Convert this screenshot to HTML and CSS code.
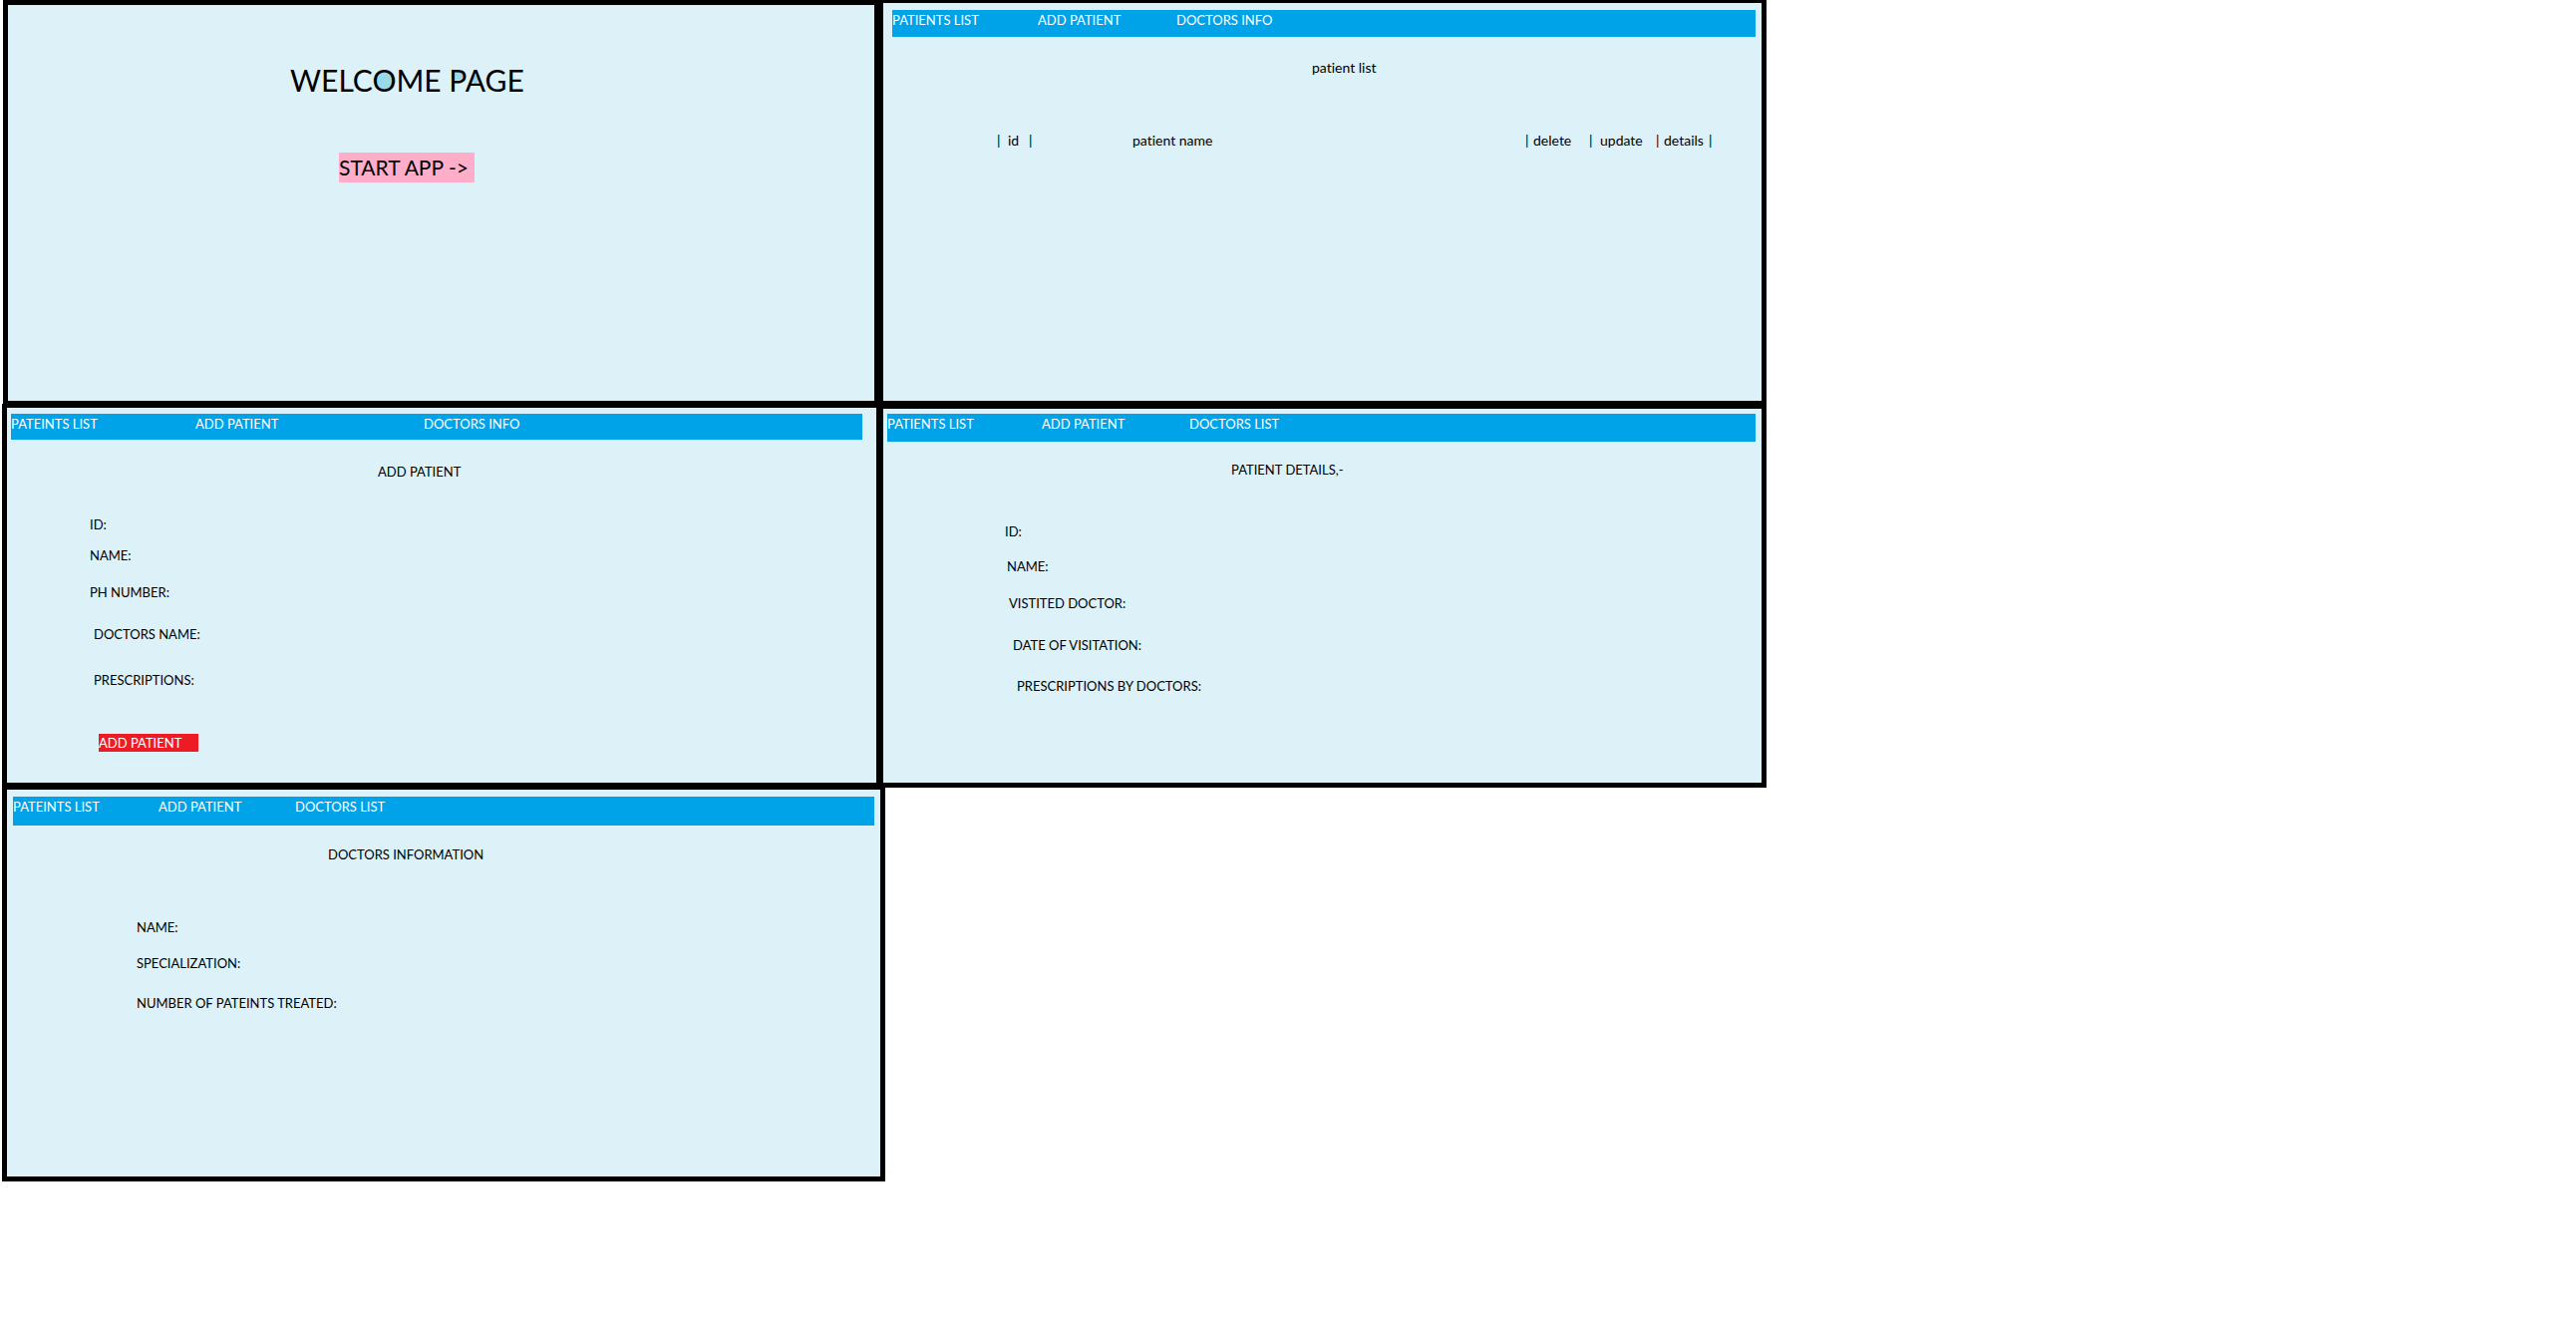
FILE: index.html
```
<!DOCTYPE html>
<html lang="en">
<head>
<meta charset="utf-8">
<title>Patient app wireframes</title>
<link rel="stylesheet" href="styles.css">
</head>
<body>
<main class="board">
  <div class="row row-top">
    <section class="frame welcome">
      <h1 class="welcome-title">WELC<span class="fill-o">O</span>ME <span class="fill-p">P</span><span class="fill-a">A</span>GE</h1>
      <button type="button" class="start">START APP -&gt;</button>
    </section>
    <section class="frame list">
      <nav class="nav">
        <a href="#">PATIENTS LIST</a><a href="#">ADD PATIENT</a><a href="#">DOCTORS INFO</a>
      </nav>
      <h2 class="title">patient list</h2>
      <table class="patients">
        <thead>
          <tr>
            <td class="c-bar">|</td><th class="c-id">id</th><td class="c-bar">|</td>
            <th class="c-name">patient name</th>
            <td class="c-tight">|</td><th class="c-action">delete</th>
            <td class="c-bar">|</td><th class="c-action">update</th>
            <td class="c-tight">|</td><th class="c-details">details</th><td class="c-end">|</td>
          </tr>
        </thead>
      </table>
    </section>
  </div>

  <div class="row row-middle">
    <section class="frame add">
      <nav class="nav">
        <a href="#">PATEINTS LIST</a><a href="#">ADD PATIENT</a><a href="#">DOCTORS INFO</a>
      </nav>
      <h2 class="title">ADD PATIENT</h2>
      <form class="fields">
        <div class="field"><label for="pid">ID:</label><input id="pid" type="text"></div>
        <div class="field"><label for="pname">NAME:</label><input id="pname" type="text"></div>
        <div class="field"><label for="phone">PH NUMBER:</label><input id="phone" type="tel"></div>
        <div class="field inset"><label for="doctor">DOCTORS NAME:</label><input id="doctor" type="text"></div>
        <div class="field inset"><label for="presc">PRESCRIPTIONS:</label><input id="presc" type="text"></div>
        <button type="button" class="submit">ADD PATIENT</button>
      </form>
    </section>
    <section class="frame details">
      <nav class="nav">
        <a href="#">PATIENTS LIST</a><a href="#">ADD PATIENT</a><a href="#">DOCTORS LIST</a>
      </nav>
      <h2 class="title">PATIENT DETAILS,-</h2>
      <ul class="fields">
        <li>ID:</li>
        <li>NAME:</li>
        <li>VISTITED DOCTOR:</li>
        <li>DATE OF VISITATION:</li>
        <li>PRESCRIPTIONS BY DOCTORS:</li>
      </ul>
    </section>
  </div>

  <div class="row row-bottom">
    <section class="frame doctors">
      <nav class="nav">
        <a href="#">PATEINTS LIST</a><a href="#">ADD PATIENT</a><a href="#">DOCTORS LIST</a>
      </nav>
      <h2 class="title">DOCTORS INFORMATION</h2>
      <ul class="fields">
        <li>NAME:</li>
        <li>SPECIALIZATION:</li>
        <li>NUMBER OF PATEINTS TREATED:</li>
      </ul>
    </section>
  </div>
</main>
</body>
</html>
```
FILE: styles.css
```
* { box-sizing: border-box; }

body {
  margin: 0;
  background: #fff;
  color: #000;
  font: 13px/18px Lato, "Liberation Sans", sans-serif;
  font-variant-ligatures: none;
}

h1, h2, ul { margin: 0; padding: 0; font-weight: 400; }
ul { list-style: none; }
button, input { font: inherit; border: 0; padding: 0; background: none; }

/* Board: the last column of each row stays empty */
.board { padding-left: 2px; }
.row { display: grid; align-items: stretch; }
.row-top { grid-template-columns: 878fr 891fr 812fr; padding-left: 1px; }
.row-middle { grid-template-columns: 880fr 890fr 812fr; }
.row-bottom { grid-template-columns: 886fr 1696fr; }

.frame { background: #dcf1f8; border: 5px solid #000; }

/* Navigation bar */
.nav {
  display: grid;
  padding-top: 1px;
  background: #00a2e8;
  color: #fff;
}
.nav a { color: inherit; text-decoration: none; white-space: nowrap; }
.title { font-size: 13px; line-height: 18px; white-space: nowrap; }

/* Welcome */
.welcome { min-height: 405px; border-width: 5px 4px 3px 5px; padding: 55px 0 0 283px; }
.welcome-title { font-size: 30px; line-height: 40px; white-space: nowrap; }
.fill-o { background: radial-gradient(ellipse 9px 10px at 50% 53%, #99d9ea 95%, transparent); }
.fill-p { background: radial-gradient(ellipse 6px 5px at 50% 38%, #99d9ea 90%, transparent); }
.fill-a { background: radial-gradient(ellipse 3px 4px at 50% 50%, #99d9ea 90%, transparent); }
.start {
  display: block;
  width: 136px;
  height: 30px;
  margin: 53px 0 0 49px;
  background: #ffaec9;
  color: #000;
  font-size: 21px;
  line-height: 30px;
  text-align: left;
  white-space: nowrap;
}

/* Patient list */
.list { border-width: 3px 5px 3px 5px; padding-top: 7px; }
.list .nav { grid-template-columns: 146px 139px 1fr; margin: 0 6px 0 9px; height: 27px; }
.list .title { margin: 22px 0 0 430px; font-size: 14px; }
.patients {
  width: calc(100% - 163px);
  margin: 55px 49px 0 114px;
  border-collapse: collapse;
  table-layout: fixed;
  font-size: 14px;
}
.patients th, .patients td { padding: 0; font-weight: 400; text-align: left; white-space: nowrap; }
.c-bar { width: 11px; }
.c-tight { width: 8px; }
.c-id { width: 21px; }
.patients .c-name { padding-left: 93px; }
.c-action { width: 56px; }
.c-details { width: 45px; }
.c-end { width: 4px; }

/* Add patient */
.add { border-width: 4px 3px 5px 5px; padding-top: 6px; }
.add .nav { grid-template-columns: 185px 229px 1fr; margin: 0 14px 0 4px; height: 26px; }
.add .title { margin: 23px 0 0 372px; }
.add .fields { display: grid; grid-template-rows: 31px 37px 42px 46px 63px 18px; margin: 35px 0 31px 83px; }
.field { display: flex; gap: 8px; }
.field input { flex: 0 1 300px; height: 18px; }
.field.inset { padding-left: 4px; }
.submit {
  width: 100px;
  margin-left: 9px;
  background: #ed1c24;
  color: #fff;
  text-align: left;
}

/* Patient details */
.details { border-width: 5px 5px 5px 4px; padding-top: 5px; }
.details .nav { grid-template-columns: 155px 148px 1fr; margin: 0 6px 0 4px; height: 28px; }
.details .title { margin: 19px 0 0 349px; }
.details .fields { display: grid; grid-template-rows: 35px 37px 42px 41px 18px; margin: 44px 0 0 122px; }
.details li:nth-child(2) { padding-left: 2px; }
.details li:nth-child(3) { padding-left: 4px; }
.details li:nth-child(4) { padding-left: 8px; }
.details li:nth-child(5) { padding-left: 12px; }

/* Doctors */
.doctors { min-height: 395px; border-top-width: 2px; padding-top: 7px; }
.doctors .nav { grid-template-columns: 146px 137px 1fr; margin: 0 6px; height: 29px; }
.doctors .title { margin: 20px 0 0 322px; }
.doctors .fields { display: grid; grid-template-rows: 36px 40px 18px; margin: 55px 0 0 130px; }
```
